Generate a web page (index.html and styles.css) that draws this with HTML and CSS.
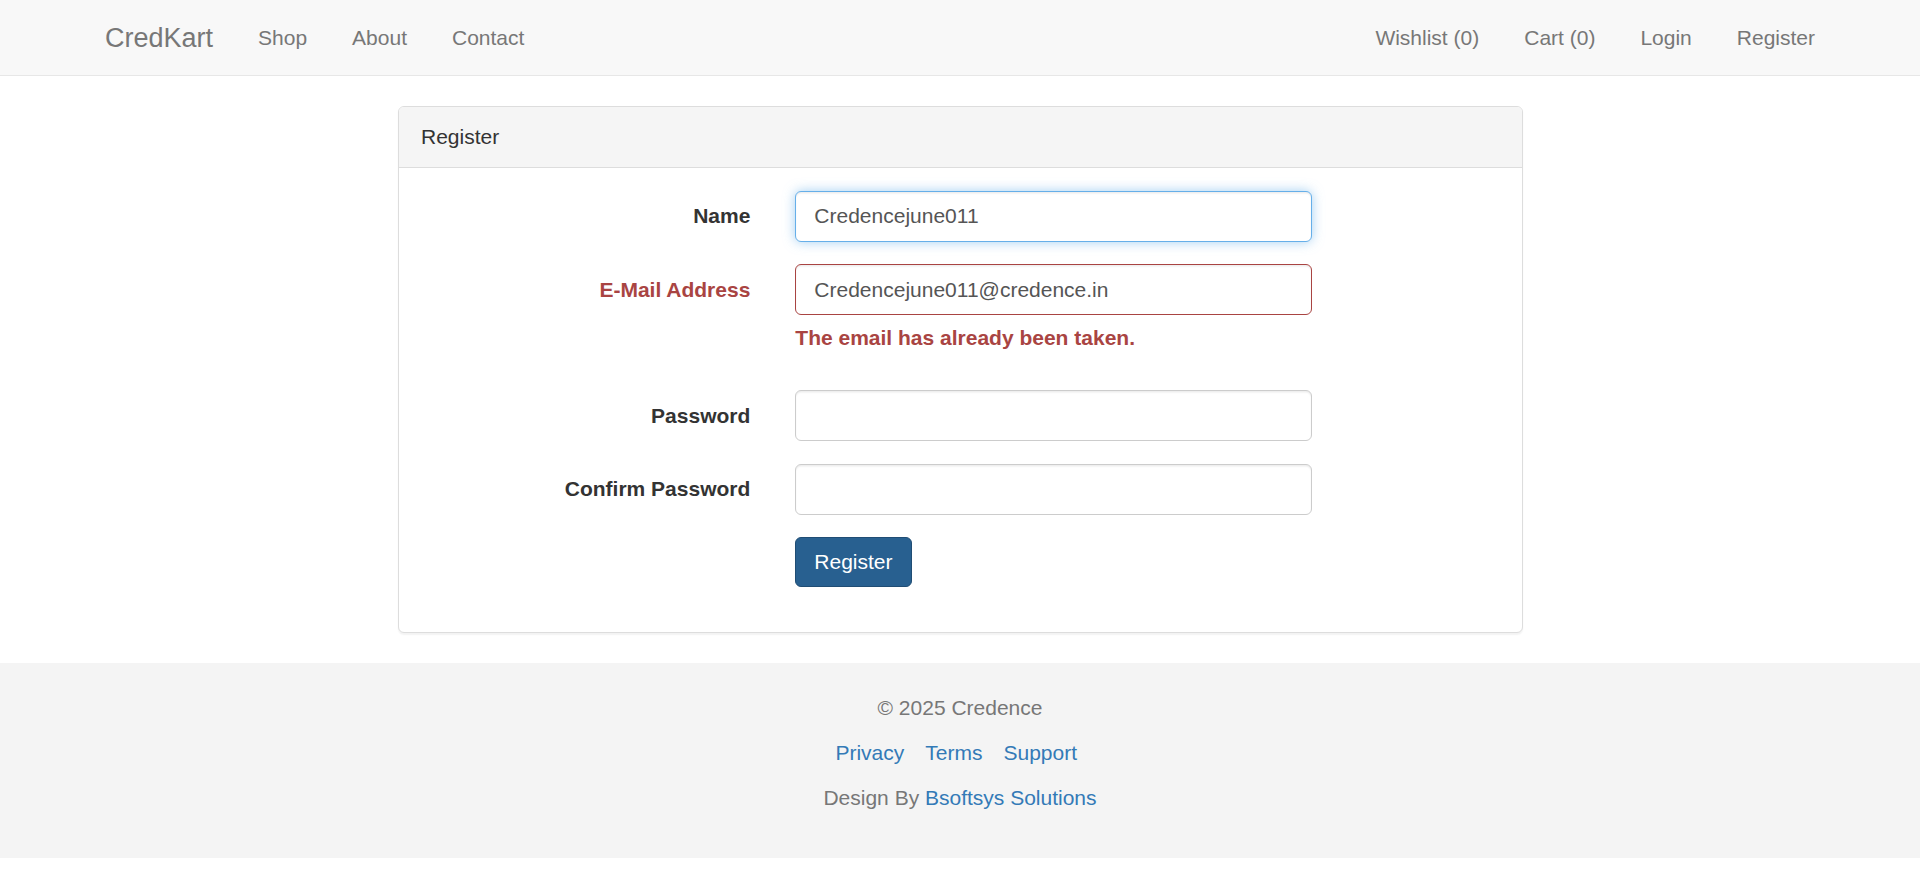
FILE: index.html
```html
<!DOCTYPE html>
<html lang="en">
<head>
<meta charset="utf-8">
<title>CredKart - Register</title>
<link rel="stylesheet" href="styles.css">
</head>
<body>
<nav class="navbar">
  <div class="container nav-inner">
    <div class="nav-left">
      <a class="brand" href="#">CredKart</a>
      <ul class="nav">
        <li><a href="#">Shop</a></li>
        <li><a href="#">About</a></li>
        <li><a href="#">Contact</a></li>
      </ul>
    </div>
    <ul class="nav nav-right">
      <li><a href="#">Wishlist (0)</a></li>
      <li><a href="#">Cart (0)</a></li>
      <li><a href="#">Login</a></li>
      <li><a href="#">Register</a></li>
    </ul>
  </div>
</nav>

<main class="container">
  <div class="panel">
    <div class="panel-heading">Register</div>
    <div class="panel-body">
      <form class="form-horizontal">
        <div class="form-group">
          <label class="control-label" for="name">Name</label>
          <div class="control">
            <input id="name" class="form-control focused" type="text" value="Credencejune011">
          </div>
        </div>
        <div class="form-group has-error">
          <label class="control-label" for="email">E-Mail Address</label>
          <div class="control">
            <input id="email" class="form-control" type="email" value="Credencejune011@credence.in">
            <span class="help-block"><strong>The email has already been taken.</strong></span>
          </div>
        </div>
        <div class="form-group">
          <label class="control-label" for="password">Password</label>
          <div class="control">
            <input id="password" class="form-control" type="password">
          </div>
        </div>
        <div class="form-group">
          <label class="control-label" for="password-confirm">Confirm Password</label>
          <div class="control">
            <input id="password-confirm" class="form-control" type="password">
          </div>
        </div>
        <div class="form-group">
          <div class="control-spacer"></div>
          <div class="control">
            <button type="submit" class="btn btn-primary">Register</button>
          </div>
        </div>
      </form>
    </div>
  </div>
</main>

<footer class="footer">
  <p class="muted">© 2025 Credence</p>
  <p class="links"><a href="#">Privacy</a><a href="#">Terms</a><a href="#">Support</a></p>
  <p class="muted">Design By <a href="#">Bsoftsys Solutions</a></p>
</footer>
</body>
</html>
```

FILE: styles.css
```css
* { box-sizing: border-box; }

html, body {
  margin: 0;
  padding: 0;
}

body {
  font-family: "Liberation Sans", Arial, Helvetica, sans-serif;
  font-size: 21px;
  line-height: 30px;
  color: #333;
  background: #fff;
}

a { text-decoration: none; }

.container {
  width: 1755px;
  margin: 0 auto;
  padding: 0 22.5px;
}

/* Navbar */
.navbar {
  background: #f8f8f8;
  border-bottom: 1px solid #e7e7e7;
  min-height: 76px;
  margin-bottom: 30px;
}

.nav-inner {
  display: flex;
  justify-content: space-between;
  align-items: flex-start;
}

.nav-left {
  display: flex;
  margin-left: -22.5px;
}

.brand {
  display: block;
  height: 75px;
  padding: 22.5px;
  font-size: 27px;
  line-height: 30px;
  color: #777;
}

.nav {
  list-style: none;
  margin: 0;
  padding: 0;
  display: flex;
}

.nav-right { margin-right: -22.5px; }

.nav a {
  display: block;
  padding: 22.5px;
  line-height: 30px;
  color: #777;
}

/* Panel */
.panel {
  width: 1125px;
  margin: 0 auto 30px;
  background: #fff;
  border: 1px solid #ddd;
  border-radius: 6px;
  box-shadow: 0 1.5px 1.5px rgba(0, 0, 0, 0.05);
}

.panel-heading {
  padding: 15px 22.5px;
  background: #f5f5f5;
  border-bottom: 1px solid #ddd;
  border-radius: 5px 5px 0 0;
  color: #333;
}

.panel-body {
  padding: 22.5px;
}

/* Form */
.form-horizontal {
  margin: 0 -22.5px;
}

.form-group {
  display: flex;
  margin-bottom: 22.5px;
}

.control-label,
.control-spacer {
  flex: 0 0 33.3333%;
  padding: 10.5px 22.5px 0;
  text-align: right;
  font-weight: bold;
  margin: 0;
}

.control {
  flex: 0 0 50%;
  padding: 0 22.5px;
}

.form-control {
  display: block;
  width: 100%;
  height: 51px;
  padding: 9px 18px;
  font-family: inherit;
  font-size: 21px;
  line-height: 30px;
  color: #555;
  background: #fff;
  border: 1px solid #ccc;
  border-radius: 6px;
  box-shadow: inset 0 1.5px 1.5px rgba(0, 0, 0, 0.075);
  outline: none;
}

.form-control.focused {
  border-color: #66afe9;
  box-shadow: inset 0 1.5px 1.5px rgba(0, 0, 0, 0.075), 0 0 12px rgba(102, 175, 233, 0.6);
}

.has-error .control-label { color: #a94442; }

.has-error .form-control {
  border-color: #a94442;
}

.help-block {
  display: block;
  margin: 7.5px 0 15px;
  color: #a94442;
}

.btn {
  display: inline-block;
  padding: 9px 18px;
  font-family: inherit;
  font-size: 21px;
  line-height: 30px;
  border: 1px solid transparent;
  border-radius: 6px;
  cursor: pointer;
}

.btn-primary {
  color: #fff;
  background: #286090;
  border-color: #204d74;
}

/* Footer */
.footer {
  background: #f4f4f4;
  padding: 30px 0;
  text-align: center;
}

.footer p {
  margin: 0 0 15px;
}

.footer .muted { color: #777; }

.footer a { color: #337ab7; }

.footer .links { padding-right: 7.5px; }

.footer .links a { margin: 0 10.5px; }
```
